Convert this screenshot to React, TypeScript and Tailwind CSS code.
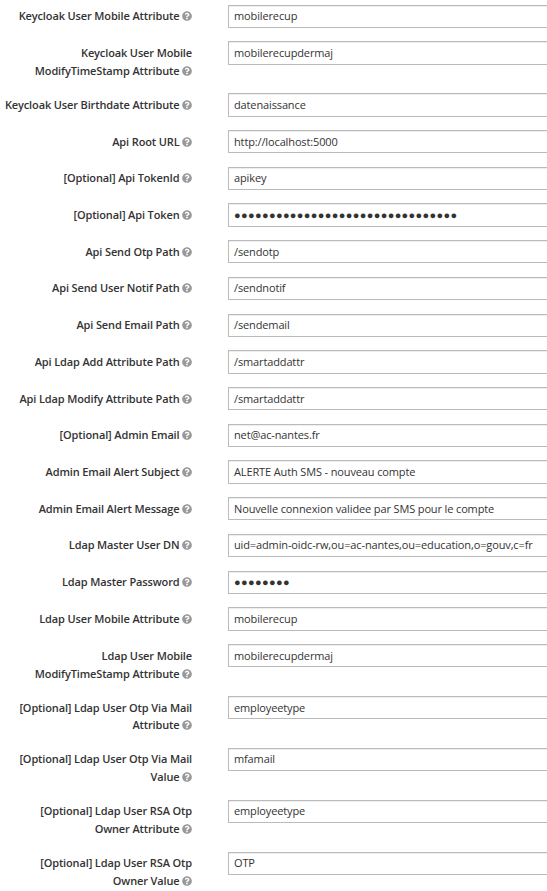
import React from "react";
import { FaQuestionCircle } from "react-icons/fa";
import clsx from "clsx";

type Row = {
  lines: string[];
  value: string;
  secret?: boolean;
  size: string;
  field?: string;
  low?: boolean;
  tight?: boolean;
};

const rows: Row[] = [
  { lines: ["Keycloak User Mobile Attribute"], value: "mobilerecup", size: "h-9" },
  { lines: ["Keycloak User Mobile", "ModifyTimeStamp Attribute"], value: "mobilerecupdermaj", size: "h-13", field: "h-6", low: true },
  { lines: ["Keycloak User Birthdate Attribute"], value: "datenaissance", size: "h-[37px]", field: "h-6", low: true },
  { lines: ["Api Root URL"], value: "http://localhost:5000", size: "h-[37px]", low: true },
  { lines: ["[Optional] Api TokenId"], value: "apikey", size: "h-9" },
  { lines: ["[Optional] Api Token"], value: "●".repeat(32), secret: true, size: "h-[37px]", field: "h-6", low: true },
  { lines: ["Api Send Otp Path"], value: "/sendotp", size: "h-[37px]", low: true },
  { lines: ["Api Send User Notif Path"], value: "/sendnotif", size: "h-[37px]" },
  { lines: ["Api Send Email Path"], value: "/sendemail", size: "h-9" },
  { lines: ["Api Ldap Add Attribute Path"], value: "/smartaddattr", size: "h-[37px]", field: "h-6", low: true },
  { lines: ["Api Ldap Modify Attribute Path"], value: "/smartaddattr", size: "h-[37px]", low: true },
  { lines: ["[Optional] Admin Email"], value: "net@ac-nantes.fr", size: "h-9" },
  { lines: ["Admin Email Alert Subject"], value: "ALERTE Auth SMS - nouveau compte", size: "h-[37px]", field: "h-6", low: true },
  { lines: ["Admin Email Alert Message"], value: "Nouvelle connexion validee par SMS pour le compte", size: "h-[37px]", low: true },
  { lines: ["Ldap Master User DN"], value: "uid=admin-oidc-rw,ou=ac-nantes,ou=education,o=gouv,c=fr", size: "h-[37px]" },
  { lines: ["Ldap Master Password"], value: "●".repeat(8), secret: true, size: "h-9" },
  { lines: ["Ldap User Mobile Attribute"], value: "mobilerecup", size: "h-[37px]", field: "h-6", low: true },
  { lines: ["Ldap User Mobile", "ModifyTimeStamp Attribute"], value: "mobilerecupdermaj", size: "h-13", low: true },
  { lines: ["[Optional] Ldap User Otp Via Mail", "Attribute"], value: "employeetype", size: "h-13", low: true, tight: true },
  { lines: ["[Optional] Ldap User Otp Via Mail", "Value"], value: "mfamail", size: "h-13" },
  { lines: ["[Optional] Ldap User RSA Otp", "Owner Attribute"], value: "employeetype", size: "h-13" },
  { lines: ["[Optional] Ldap User RSA Otp", "Owner Value"], value: "OTP", size: "h-[39px]" },
];

function FormRow({ lines, value, secret, size, field = "h-[23px]", low, tight }: Row) {
  return (
    <div className={clsx("flex", size)}>
      <div
        className={clsx(
          "w-48 shrink-0 text-right font-semibold tracking-[-0.135px] whitespace-nowrap",
          low ? "pt-[3px]" : "pt-0.5",
        )}
      >
        {lines.map((line, n) => (
          <div
            key={line}
            className={clsx("flex items-center justify-end gap-[2.5px]", tight && n === 0 ? "h-[17px]" : "h-[18px]")}
          >
            <span>{line}</span>
            {n === lines.length - 1 && <FaQuestionCircle className="size-2.5 text-[#999]" />}
          </div>
        ))}
      </div>
      <div
        className={clsx(
          "ml-9 flex-1 overflow-hidden border border-r-0 border-[#bbb] pl-[5px] whitespace-nowrap shadow-[inset_0_1px_0_#eee]",
          field,
          low ? "pt-0.5" : "pt-px",
          secret ? "tracking-[0.34px]" : "tracking-[-0.13px]",
        )}
      >
        {value}
      </div>
    </div>
  );
}

export default function App() {
  return (
    <div className="flex h-[891px] w-full flex-col overflow-hidden bg-white pt-[5px] font-['Open_Sans','Noto_Sans',sans-serif] text-[11px] leading-[18px] text-[#333]">
      {rows.map((row, i) => (
        <FormRow key={i} {...row} />
      ))}
    </div>
  );
}
